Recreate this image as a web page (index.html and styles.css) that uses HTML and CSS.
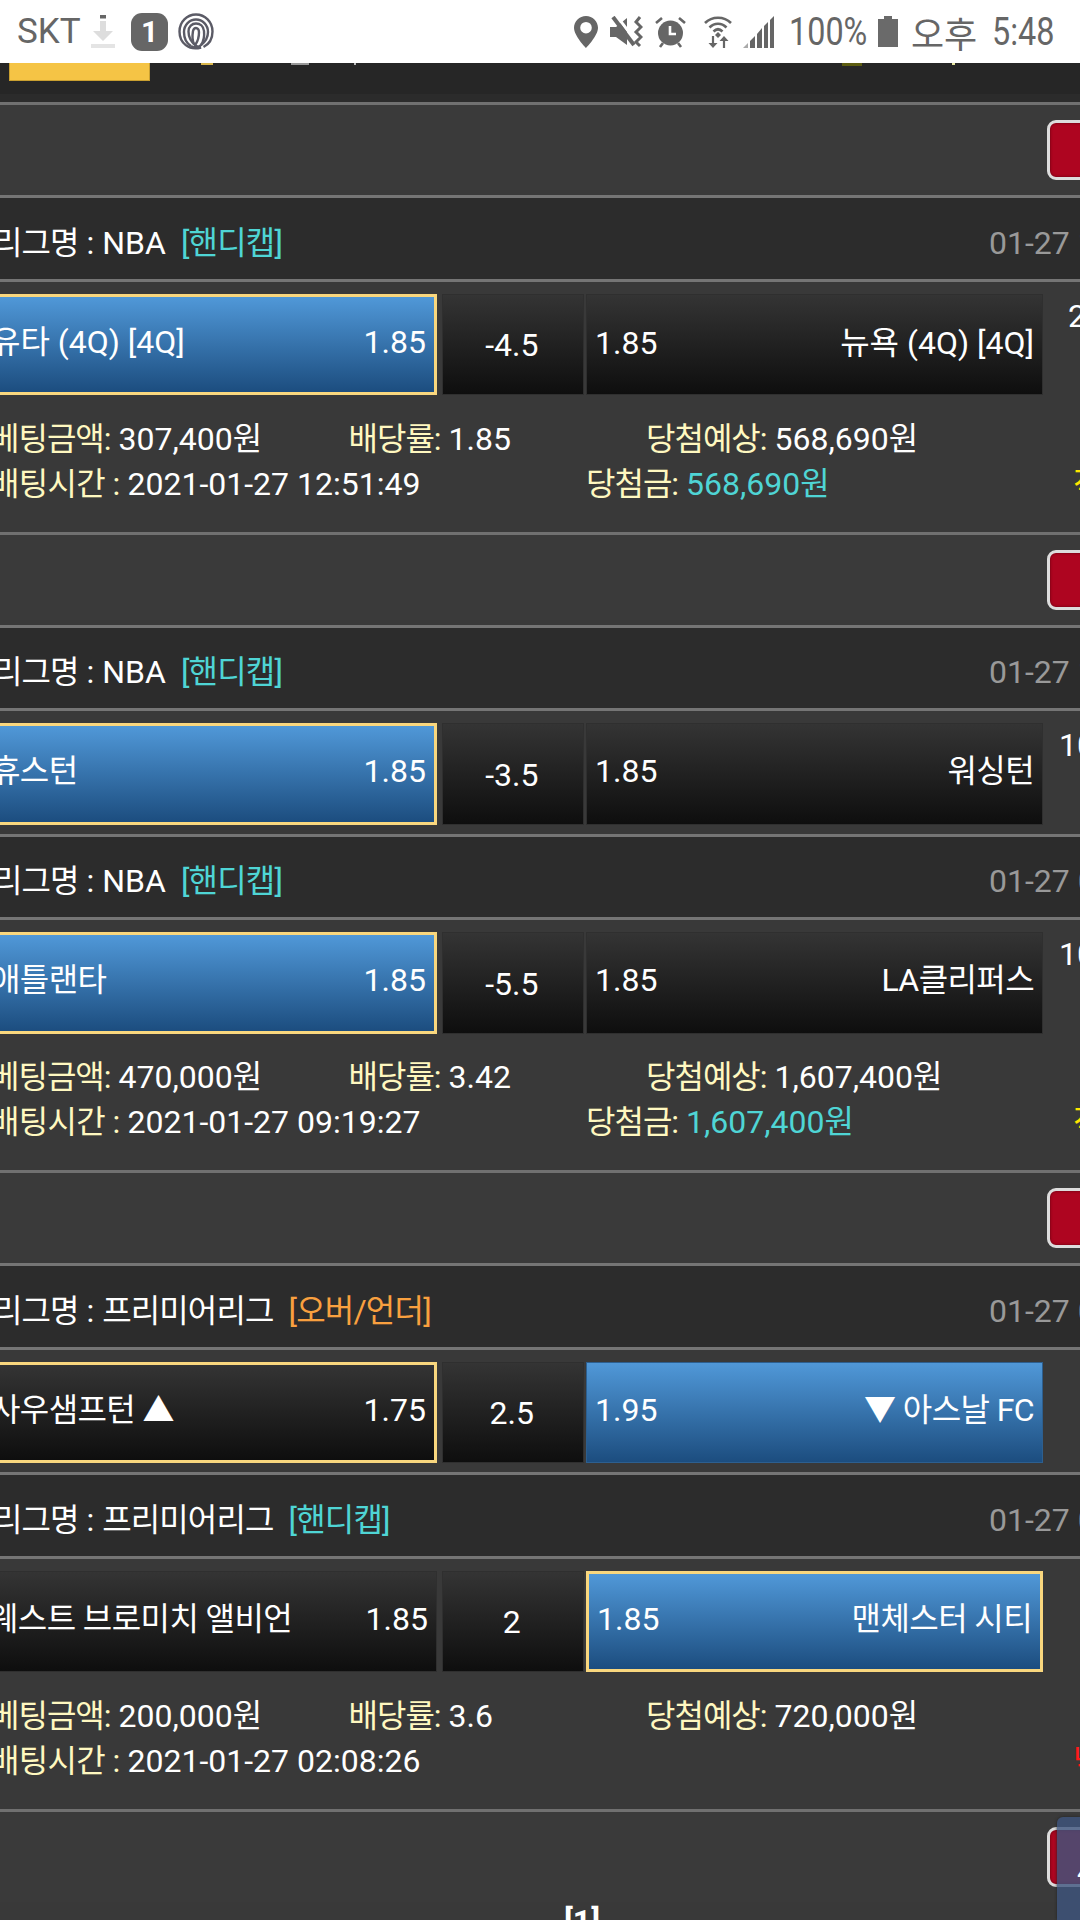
FILE: index.html
```html
<!DOCTYPE html>
<html lang="ko">
<head>
    <meta charset="UTF-8">
    <meta name="viewport" content="width=device-width, initial-scale=1.0">
    <title>배팅내역</title>
    <link rel="stylesheet" href="styles.css">
</head>
<body>

    <!-- phone status bar -->
    <div class="status-bar">
        <span class="carrier">SKT</span>
        <svg class="ic-download" viewBox="0 0 24 33">
            <rect x="9" y="0" width="6" height="3.5" fill="#666"/>
            <path d="M9 6h6v10h7L12 26 2 16h7z" fill="#ddd"/>
            <rect x="0" y="29" width="24" height="4" fill="#e4e4e4"/>
        </svg>
        <span class="badge-one">1</span>
        <svg class="ic-spiral" viewBox="0 0 36 37" fill="none" stroke="#5b5b66" stroke-width="2.4">
            <path d="M23 34.5C11 38 1.5 30 1.5 18.5 1.5 9 9 1.5 18 1.5s16.5 7.5 16.5 17c0 7.5-4 13-9 15.5"/>
            <path d="M13 33C8 30 6 24 6 19 6 12 11.5 6.5 18 6.5S30 12 30 19c0 5-3 10-7 13"/>
            <path d="M13 33c3 2.5 8 1.5 10-1 3-4 3.5-9 3-14-.5-5-4-7.5-8-7.5s-7.5 3-7.5 8c0 6 3.5 11 7 14 2 1.5 4 2 5.5 1.5"/>
            <path d="M16 31c-2-4-1.5-10-1-13 .5-2 1.5-3 3-3s3 1.5 3 4c0 4-1 9-3.5 12.5"/>
        </svg>

        <div class="status-right">
            <svg class="ic-pin" viewBox="0 0 24 32">
                <path fill="#666" fill-rule="evenodd" d="M12 0C5.4 0 0 5.3 0 11.8 0 20 12 32 12 32s12-12 12-20.200C24 5.3 18.6 0 12 0zm0 17.5a5.8 5.8 0 1 1 0-11.6 5.8 5.8 0 0 1 0 11.6z"/>
            </svg>
            <svg class="ic-mute" viewBox="0 0 33 32">
                <path fill="#666" d="M0 11h6l11-9v27L6 21H0z"/>
                <path stroke="#fff" stroke-width="3" d="M6 -1l22 29"/>
                <path stroke="#666" stroke-width="4" d="M3 1l21 28"/>
                <path stroke="#666" stroke-width="3" fill="none" d="M30 1l-4 5 5 5-5 5 5 5-5 5 4 4"/>
            </svg>
            <svg class="ic-alarm" viewBox="0 0 31 32">
                <circle cx="15.5" cy="17" r="12.5" fill="#666"/>
                <path stroke="#fff" stroke-width="2.6" fill="none" d="M15 10v8h6"/>
                <path stroke="#666" stroke-width="2.6" d="M1 7l6-5M30 7l-6-5M5 31l3-4M26 31l-3-4"/>
            </svg>
            <svg class="ic-wifi" viewBox="0 0 28 33" fill="none" stroke="#666" stroke-width="2.6">
                <path d="M1 8c7-7 19-7 26 0"/>
                <path d="M5.5 12.5c5-5 12-5 17 0"/>
                <path d="M9.5 16.5c3-3 6-3 9 0"/>
                <path fill="#666" stroke="none" d="M14 17l3 3-3 3-3-3z"/>
                <path stroke-width="2.2" d="M9 21v9M20 33v-10"/>
                <path fill="#666" stroke="none" d="M4.5 28h9L9 33zM15.5 26h9L20 21z"/>
            </svg>
            <svg class="ic-signal" viewBox="0 0 31 32">
                <path fill="#aaa" d="M0 32l5-5v5z"/>
                <path fill="#666" d="M7 25l5-5v12H7zM14 18l5-6v20h-5zM21 10l4-4v26h-4zM27 4l4-4v32h-4z"/>
            </svg>
            <span class="battery-pct">100%</span>
            <svg class="ic-battery" viewBox="0 0 20 31">
                <path fill="#6a6a6a" d="M6 0h8v3h6v28H0V3h6z"/>
            </svg>
            <span class="ampm">오후</span>
            <span class="clock">5:48</span>
        </div>
    </div>

    <div class="sheet">

        <div class="top-strip">
            <div class="logo-clip"></div>
            <i class="mark m-a"></i>
            <i class="mark m-b"></i>
            <i class="mark m-c"></i>
            <i class="mark m-d"></i>
            <i class="mark m-e"></i>
        </div>

        <div class="head"><span class="del-btn"></span></div>
        <div class="league">
            <span><span class="kr">리그명</span> : NBA</span><span class="tag handi">[핸디캡]</span>
            <span class="date">01-27 13:00</span>
        </div>
        <div class="match">
            <div class="odds">
                <div class="cell home blue picked"><span>유타 (4Q) [4Q]</span><span>1.85</span></div>
                <div class="cell mid">-4.5</div>
                <div class="cell away low"><span>1.85</span><span>뉴욕 (4Q) [4Q]</span></div>
                <div class="far">2</div>
            </div>
            <div class="info">
                <div class="info-row">
                    <span class="stake"><b>베팅금액:</b> 307,400원</span>
                    <span class="rate"><b>배당률:</b> 1.85</span>
                    <span><b>당첨예상:</b> 568,690원</span>
                </div>
                <div class="info-row">
                    <span class="when"><b>배팅시간 :</b> 2021-01-27 12:51:49</span>
                    <span class="won"><b>당첨금:</b> <em>568,690원</em></span>
                    <span class="state hit">적중</span>
                </div>
            </div>
        </div>

        <div class="head"><span class="del-btn"></span></div>
        <div class="league">
            <span><span class="kr">리그명</span> : NBA</span><span class="tag handi">[핸디캡]</span>
            <span class="date">01-27 10:00</span>
        </div>
        <div class="match short">
            <div class="odds">
                <div class="cell home blue picked"><span class="kr">휴스턴</span><span>1.85</span></div>
                <div class="cell mid">-3.5</div>
                <div class="cell away"><span>1.85</span><span class="kr">워싱턴</span></div>
                <div class="far">10</div>
            </div>
        </div>
        <div class="league">
            <span><span class="kr">리그명</span> : NBA</span><span class="tag handi">[핸디캡]</span>
            <span class="date">01-27 09:30</span>
        </div>
        <div class="match">
            <div class="odds">
                <div class="cell home blue picked"><span class="kr">애틀랜타</span><span>1.85</span></div>
                <div class="cell mid">-5.5</div>
                <div class="cell away"><span>1.85</span><span class="kr">LA클리퍼스</span></div>
                <div class="far">10</div>
            </div>
            <div class="info">
                <div class="info-row">
                    <span class="stake"><b>베팅금액:</b> 470,000원</span>
                    <span class="rate"><b>배당률:</b> 3.42</span>
                    <span><b>당첨예상:</b> 1,607,400원</span>
                </div>
                <div class="info-row">
                    <span class="when"><b>배팅시간 :</b> 2021-01-27 09:19:27</span>
                    <span class="won"><b>당첨금:</b> <em>1,607,400원</em></span>
                    <span class="state hit">적중</span>
                </div>
            </div>
        </div>

        <div class="head"><span class="del-btn"></span></div>
        <div class="league">
            <span><span class="kr">리그명</span> : <span class="kr">프리미어리그</span></span><span class="tag over">[오버/언더]</span>
            <span class="date">01-27 05:00</span>
        </div>
        <div class="match short">
            <div class="odds">
                <div class="cell home picked"><span class="kr">사우샘프턴 ▲</span><span>1.75</span></div>
                <div class="cell mid">2.5</div>
                <div class="cell away blue"><span>1.95</span><span class="kr">▼ 아스날 FC</span></div>
            </div>
        </div>
        <div class="league">
            <span><span class="kr">리그명</span> : <span class="kr">프리미어리그</span></span><span class="tag handi">[핸디캡]</span>
            <span class="date">01-27 05:15</span>
        </div>
        <div class="match">
            <div class="odds">
                <div class="cell home"><span class="kr">웨스트 브로미치 앨비언</span><span>1.85</span></div>
                <div class="cell mid">2</div>
                <div class="cell away blue picked"><span>1.85</span><span class="kr">맨체스터 시티</span></div>
            </div>
            <div class="info">
                <div class="info-row">
                    <span class="stake"><b>베팅금액:</b> 200,000원</span>
                    <span class="rate"><b>배당률:</b> 3.6</span>
                    <span><b>당첨예상:</b> 720,000원</span>
                </div>
                <div class="info-row">
                    <span class="when"><b>배팅시간 :</b> 2021-01-27 02:08:26</span>
                    <span class="won"></span>
                    <span class="state miss">낙첨</span>
                </div>
            </div>
        </div>

        <div class="head"><span class="del-btn"></span></div>
        <div class="pager">[1]</div>
    </div>

    <!-- floating widget stuck to the right edge -->
    <div class="float-tab">4</div>

</body>
</html>
```

FILE: styles.css
```css
html, body {
    margin: 0;
    padding: 0;
    width: 1080px;
    height: 1920px;
    overflow: hidden;
    background-color: #393939;
}
body {
    font-family: Roboto, "Noto Sans CJK KR", sans-serif;
    font-size: 32px;
    color: #fff;
}
/* the hangul in the screenshot runs a little tighter than Noto */
.kr {
    letter-spacing: -0.6px;
}

/* status bar */
.status-bar {
    display: flex;
    align-items: center;
    height: 63px;
    padding-left: 17px;
    background-color: #fff;
    color: #666;
}
.status-bar svg {
    display: block;
    flex: none;
}
.carrier {
    width: 63px;
    font-size: 35px;
}
.ic-download {
    width: 24px;
    height: 33px;
    margin-left: 11px;
}
.badge-one {
    display: flex;
    align-items: center;
    justify-content: center;
    width: 37px;
    height: 38px;
    margin-left: 16px;
    border-radius: 11px;
    background-color: #666;
    color: #fff;
    font-size: 30px;
    font-weight: 700;
}
.ic-spiral {
    width: 36px;
    height: 37px;
    margin-left: 10px;
}
.status-right {
    display: flex;
    align-items: center;
    margin-left: auto;
    width: 506px;
}
.ic-pin {
    width: 24px;
    height: 32px;
}
.ic-mute {
    width: 33px;
    height: 32px;
    margin-left: 12px;
}
.ic-alarm {
    width: 31px;
    height: 32px;
    margin-left: 12px;
}
.ic-wifi {
    width: 28px;
    height: 33px;
    margin-left: 18px;
}
.ic-signal {
    width: 31px;
    height: 32px;
    margin-left: 11px;
}
.battery-pct,
.clock {
    font-size: 39px;
    white-space: nowrap;
    transform: scaleX(0.83);
    transform-origin: left center;
}
.battery-pct {
    width: 79px;
    margin-left: 15px;
}
.ic-battery {
    width: 20px;
    height: 31px;
    margin-left: 10px;
}
.ampm {
    width: 67px;
    margin-left: 13px;
    font-size: 36px;
    white-space: nowrap;
}
.clock {
    width: 62px;
    margin-left: 14px;
}

/* the page is scrolled sideways, so the sheet starts left of the screen */
.sheet {
    width: 1187px;
    margin-left: -60px;
}
.top-strip {
    display: flex;
    height: 39px;
    box-sizing: border-box;
    border-bottom: 8px solid #2b2b2b;
    background-color: #262626;
}
.logo-clip {
    width: 141px;
    height: 18px;
    margin-left: 69px;
    box-sizing: border-box;
    border: 1px solid #c99f30;
    border-top: none;
    background-color: #f5c445;
}
.mark {
    display: block;
    height: 2px;
}
.m-a { width: 12px; margin-left: 51px; background-color: #d9b64a; }
.m-b { width: 18px; margin-left: 78px; background-color: #999; }
.m-c { width: 2px; margin-left: 45px; background-color: #bbb; }
.m-d { width: 20px; margin-left: 486px; height: 3px; background-color: #5c5c10; }
.m-e { width: 3px; margin-left: 90px; background-color: #e6e6a0; }

.head {
    display: flex;
    align-items: center;
    justify-content: flex-end;
    height: 93px;
    box-sizing: border-box;
    border-top: 3px solid #707070;
    background-color: #3a3a3a;
}
.del-btn {
    width: 80px;
    height: 60px;
    box-sizing: border-box;
    border: 3px solid #ddd;
    border-radius: 9px;
    background-color: #ae0520;
    box-shadow: inset 0 0 3px #5e0010;
}
.league {
    display: flex;
    align-items: center;
    height: 83.5px;
    box-sizing: border-box;
    padding: 9px 0 0 53px;
    border-top: 3px solid #757575;
    background-color: #2c2c2c;
    line-height: 40px;
    white-space: nowrap;
}
.league .kr {
    letter-spacing: -0.9px;
}
.tag {
    margin-left: 15px;
    letter-spacing: -0.8px;
}
.handi { color: #4fd5d5; }
.over { color: #f9a03f; }
.date {
    margin-left: auto;
    width: 138px;
    overflow: hidden;
    color: #999;
}

.match {
    height: 253px;
    box-sizing: border-box;
    padding-top: 12px;
    border-top: 3px solid #757575;
    background-color: #393939;
}
.match.short {
    height: 125.5px;
}
.odds {
    display: flex;
    height: 101.5px;
}
.cell {
    display: flex;
    align-items: center;
    justify-content: space-between;
    box-sizing: border-box;
    padding: 0 8px 5px;
    border: 1px solid #2f2f2f;
    background: linear-gradient(#343434, #0e0e0e);
    line-height: 36px;
    white-space: nowrap;
}
.cell.blue {
    border-color: #2d5f8f;
    background: linear-gradient(#5098d8, #1c4d7f);
}
.cell.picked {
    border: 3px solid #f9d77e;
}
.home {
    width: 497px;
    padding-left: 48px;
}
.mid {
    width: 142.5px;
    margin: 0 2px 0 4.5px;
    justify-content: center;
    padding: 2px 2px 0 0;
}
.away {
    width: 457px;
}
.away.low {
    padding-bottom: 2px;
}
.far {
    width: 68px;
    line-height: 45px;
    text-align: center;
    white-space: nowrap;
}

.info {
    padding: 21.5px 0 0 50px;
}
.info-row {
    display: flex;
    line-height: 45px;
    white-space: nowrap;
}
.info-row b {
    font-weight: 400;
    letter-spacing: -1px;
    color: #fff8c0;
}
.info-row em {
    font-style: normal;
    color: #4fd5d5;
}
.when b {
    letter-spacing: -0.65px;
}
.stake,
.rate,
.when,
.won,
.state {
    flex: none;
}
.stake { width: 358.5px; }
.rate { width: 297.5px; }
.when { width: 596px; }
.won { width: 487px; }
.hit { color: #ffe600; }
.miss { color: #ff1a1a; }

.pager {
    padding-left: 624px;
    font-weight: 700;
    line-height: 38px;
}

.float-tab {
    position: absolute;
    top: 1817px;
    left: 1057px;
    width: 23px;
    height: 103px;
    box-sizing: border-box;
    padding: 36px 0 0 20px;
    overflow: hidden;
    border-top-left-radius: 6px;
    background-color: rgba(62, 85, 126, 0.8);
    box-shadow: 0 0 3px #222;
    line-height: 36px;
}
```
